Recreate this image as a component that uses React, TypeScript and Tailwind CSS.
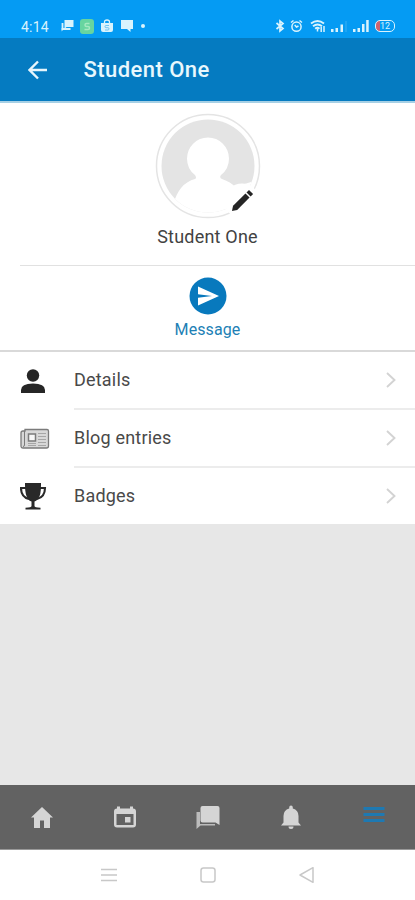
import type { ReactNode } from "react";

interface IconProps {
  className?: string;
}

function StatusBar() {
  return (
    <div className="flex h-[38px] items-end justify-between bg-[#059bf3] pr-[20px] pb-[4px] pl-[21px] text-[#d9f3fd]">
      <div className="flex h-4 items-center">
        <span className="w-[39px] pt-px text-[14px] leading-4 tracking-[0.2px]">4:14</span>
        <svg className="mr-[6px] h-[14px] w-[14px]" viewBox="0 0 14 14" fill="currentColor">
          <path d="M4.500 1H13.500V8H6.500L4.500 10z" />
          <path d="M2.500 4v6H10.500" fill="none" stroke="currentColor" strokeWidth="1.800" />
          <path d="M1.600 9h3L1.600 12.500z" />
        </svg>
        <svg className="mr-[7px] h-[15px] w-[14px]" viewBox="0 0 14 15">
          <rect width="14" height="15" rx="3" fill="#67d5a0" />
          <path d="M9.500 4.500H6.500Q5 4.500 5 6T6.500 7.500H8Q9.500 7.500 9.500 9T8 10.500H4.500" fill="none" stroke="#a5e9c0" strokeWidth="1.500" />
        </svg>
        <svg className="mr-[8px] h-[14px] w-[12px]" viewBox="0 0 12 14">
          <path d="M0 4h12v7q0 2-2 2H2q-2 0-2-2z" fill="currentColor" />
          <path d="M3.500 4V3q0-2 2.500-2t2.500 2v1" fill="none" stroke="currentColor" strokeWidth="1.300" />
          <path d="M8 6.500H5Q4 6.500 4 7.600T5 8.700H7Q8 8.700 8 9.800T7 11H4" fill="none" stroke="#6fc3f2" strokeWidth="1" />
        </svg>
        <svg className="h-[14px] w-[12px]" viewBox="0 0 12 14" fill="currentColor">
          <path d="M0 1h12v9H9.500v3L6 10H0z" />
        </svg>
        <span className="ml-[8px] h-1 w-1 rounded-full bg-[#d9f3fd]" />
      </div>
      <div className="flex h-4 items-center">
        <svg className="mr-[5px] h-[14px] w-[10px]" viewBox="0 0 10 14" fill="none" stroke="currentColor" strokeWidth="1.700">
          <path d="M1.500 4l6.500 5.500-3 2.500V2L8 4.500l-6.500 5.500" />
        </svg>
        <svg className="mr-[7px] h-[14px] w-[13px]" viewBox="0 0 13 14" fill="none" stroke="currentColor" strokeWidth="1.500">
          <circle cx="6.500" cy="7.700" r="4.600" />
          <path d="M1 3.500l2.500-2M12 3.500L9.500 1.500M4.700 6l1.800 2 2-1" />
        </svg>
        <svg className="mr-[5px] h-[14px] w-[16px]" viewBox="0 0 16 14" fill="none" stroke="currentColor" strokeWidth="1.900">
          <path d="M1 4.500q6.500-5 13 0M3 7.300q4.500-3.500 9 0M5.200 9.800q2.200-2 4.300 0" />
          <path d="M7.500 9.500v3M11.200 8v5M14 7v6" strokeWidth="1.500" />
        </svg>
        <svg className="mr-[6px] h-[14px] w-[16px]" viewBox="0 0 16 14" fill="currentColor">
          <path d="M0 10h2.500v3H0zM4.500 9H7v4H4.500zM9.500 5.500H12V13H9.500z" />
          <path d="M14.500 2h1v11h-1z" opacity="0.25" />
        </svg>
        <svg className="mr-[6px] h-[14px] w-[16px]" viewBox="0 0 16 14" fill="currentColor">
          <path d="M0 10h2.500v3H0zM4.500 9H7v4H4.500zM9 5h2.500v8H9zM13.200 1h2.500v12H13.200z" />
        </svg>
        <span className="flex h-[12px] w-[20px] items-center justify-center rounded-[5px] border-[1.500px] border-[#d9f3fd] bg-[linear-gradient(90deg,#cf626f_4px,transparent_4px)] text-[9px] leading-none">
          12
        </span>
      </div>
    </div>
  );
}

function Header() {
  return (
    <header className="flex h-[65px] items-center border-b-2 border-[#a6d0e5] bg-[#057bc1] pl-[28px]">
      <svg className="h-5 w-5" viewBox="0 0 20 20" fill="none" stroke="#e6f5fc" strokeWidth="2.400">
        <path d="M19 10H2M10 1.500L1.500 10l8.500 8.500" />
      </svg>
      <h1 className="ml-[35.500px] pt-px text-[22px] leading-7 font-medium tracking-[0.45px] text-[#e9f7fd]">Student One</h1>
    </header>
  );
}

function Avatar() {
  return (
    <svg className="h-[106px] w-[106px]" viewBox="0 0 106 106">
      <defs>
        <clipPath id="avatar">
          <circle cx="53" cy="53" r="46.500" />
        </clipPath>
      </defs>
      <circle cx="53" cy="53" r="51.500" fill="#fff" stroke="#e4e4e4" strokeWidth="1.500" />
      <g clipPath="url(#avatar)">
        <path d="M0 0h106v106H0z" fill="#e4e4e4" />
        <path d="M18 108V92Q24 70 40 66Q42 65 40 62Q32 56 32 45.500a21 21 0 0 1 42 0Q74 56 66 62Q64 65 67 66Q76 69 80 74L106 66v42z" fill="#fff" />
      </g>
      <circle cx="87" cy="88" r="17.500" fill="#fff" />
      <g transform="translate(86.500 88.500) rotate(45)" fill="#252525">
        <path d="M-2.900-8.500h5.800V9L0 13.500L-2.900 9z" />
        <path d="M-2.900-13.500h5.800v3.500h-5.800z" />
      </g>
    </svg>
  );
}

function Profile() {
  return (
    <section className="bg-white">
      <div className="flex h-[162px] flex-col items-center pt-[10px]">
        <Avatar />
        <p className="mt-[6px] text-[18px] leading-6 tracking-[0.2px] text-[#424242]">Student One</p>
      </div>
      <div className="ml-5 h-px bg-[#e1e1e1]" />
      <button className="flex h-[84px] w-full flex-col items-center pt-[11px] text-[#217fb5]">
        <svg className="h-[38px] w-[38px]" viewBox="0 0 38 38">
          <circle cx="19" cy="19" r="18.500" fill="#0879bd" />
          <path d="M9 9.500L30 19L9 28.500V20.800L23 19L9 17.200z" fill="#fff" />
        </svg>
        <span className="mt-[5px] text-[16px] leading-5 tracking-[0.1px]">Message</span>
      </button>
      <div className="h-[2px] bg-[#d9d9d9]" />
    </section>
  );
}

function PersonIcon({ className }: IconProps) {
  return (
    <svg className={className} viewBox="0 0 30 28" fill="#262626">
      <circle cx="13" cy="8.500" r="6.200" />
      <path d="M1 26v-3Q1 16.500 13 16.500t12 6.500v3z" />
    </svg>
  );
}

function NewsIcon({ className }: IconProps) {
  return (
    <svg className={className} viewBox="0 0 30 28" fill="none" stroke="#7b7b7b">
      <path d="M5 4.500h22q1.500 0 1.500 1.500v15q0 2-2 2H3q-2 0-2-2V8q0-2 2-2h2z" fill="#d8d8d8" strokeWidth="1.300" />
      <path d="M4.500 6v14q0 1.500-1.500 1.500" />
      <path d="M8.500 9h7v7h-7z" fill="#f7f7f7" strokeWidth="1.500" />
      <path d="M18 8.500h8M18 11.500h8M18 14.500h8M8 18.500h8M18 17.500h8M8 20.500h8M18 20.500h8" stroke="#a6a6a6" />
    </svg>
  );
}

function TrophyIcon({ className }: IconProps) {
  return (
    <svg className={className} viewBox="0 0 30 28">
      <path d="M6 6H1q0 9 8 11M20 6h5q0 9-8 11" fill="none" stroke="#292929" strokeWidth="2.100" />
      <path d="M5 1h16v2q0 11-3 14-2 2-3.500 2.500V24q0 1.500 6 1.800V27.500H5.500V25.800q6-.3 6-1.800v-4.500Q9.500 19 8 17 5 13 5 3z" fill="#292929" />
    </svg>
  );
}

const rows = [
  { label: "Details", icon: PersonIcon },
  { label: "Blog entries", icon: NewsIcon },
  { label: "Badges", icon: TrophyIcon },
];

function Menu() {
  return (
    <ul className="bg-white">
      {rows.map(({ label, icon: Icon }, i) => (
        <li key={label} className="flex h-[58px] items-center pl-5 last:h-[56px]">
          <Icon className="h-7 w-[30px] shrink-0" />
          <div
            className={`ml-[24px] flex h-full flex-1 items-center justify-between pr-[19px] ${
              i < rows.length - 1 ? "border-b-2 border-[#ececec]" : ""
            }`}
          >
            <span className="text-[18px] leading-6 tracking-[0.2px] text-[#494949]">{label}</span>
            <svg className="h-4 w-[10px]" viewBox="0 0 10 16" fill="none" stroke="#d3d3d3" strokeWidth="1.900">
              <path d="M1 1l7.500 7L1 15" />
            </svg>
          </div>
        </li>
      ))}
    </ul>
  );
}

function Tab({ children }: { children: ReactNode }) {
  return (
    <button className="flex flex-1 items-center justify-center">
      <svg className="h-6 w-6" viewBox="0 0 24 24" fill="#d5d5d5">
        {children}
      </svg>
    </button>
  );
}

function TabBar() {
  return (
    <nav className="flex h-[65px] border-b border-[#999] bg-[#626262]">
      <Tab>
        <path d="M12 2L1 12.500h3V23h6v-7.500h4V23h6V12.500h3z" />
      </Tab>
      <Tab>
        <path d="M4 1.500h3v2h10v-2h3v2q3 0 3 3v13q0 3-3 3H4q-3 0-3-3v-13q0-3 3-3z" />
        <path d="M3.500 9h17v11h-17z" fill="#626262" />
        <path d="M12 12h5.500v5.500H12z" />
      </Tab>
      <Tab>
        <path d="M.500 7H4v12h15v1.500H4.500L.500 24z" fill="#bcbcbc" />
        <path d="M6.500 1h15q2 0 2 2v17l-4-2.500h-13q-2 0-2-2V3q0-2 2-2z" />
      </Tab>
      <Tab>
        <path d="M12 .500q1.800 0 1.800 2v1q5.700 1.500 5.700 7.500v6.500l2.500 3H2l2.500-3V11q0-6 5.700-7.500v-1q0-2 1.800-2zM9.500 21.500h5q0 2.500-2.500 2.500T9.500 21.500z" />
      </Tab>
      <Tab>
        <path d="M1.500 2h21v3h-21zM1.500 8h21v3h-21zM1.500 14h21v3h-21z" fill="#1e79b2" />
      </Tab>
    </nav>
  );
}

function SystemNav() {
  return (
    <div className="flex h-[50px] items-center justify-center gap-[83px] bg-white">
      <svg className="h-4 w-4" viewBox="0 0 16 16" stroke="#c8c8c8" strokeWidth="1.500">
        <path d="M0 2.500h16M0 8h16M0 13.500h16" />
      </svg>
      <svg className="h-4 w-4" viewBox="0 0 16 16" fill="none" stroke="#c8c8c8" strokeWidth="1.500">
        <rect x="1" y="1" width="14" height="14" rx="2.500" />
      </svg>
      <svg className="h-4 w-4" viewBox="0 0 16 16" fill="none" stroke="#c8c8c8" strokeWidth="1.500" strokeLinejoin="round">
        <path d="M14 .700v14.600L1 8z" />
      </svg>
    </div>
  );
}

export default function App() {
  return (
    <div className="flex h-[900px] w-full flex-col overflow-hidden bg-[#e7e7e7] font-[Roboto,sans-serif]">
      <StatusBar />
      <Header />
      <Profile />
      <Menu />
      <div className="flex-1" />
      <TabBar />
      <SystemNav />
    </div>
  );
}
